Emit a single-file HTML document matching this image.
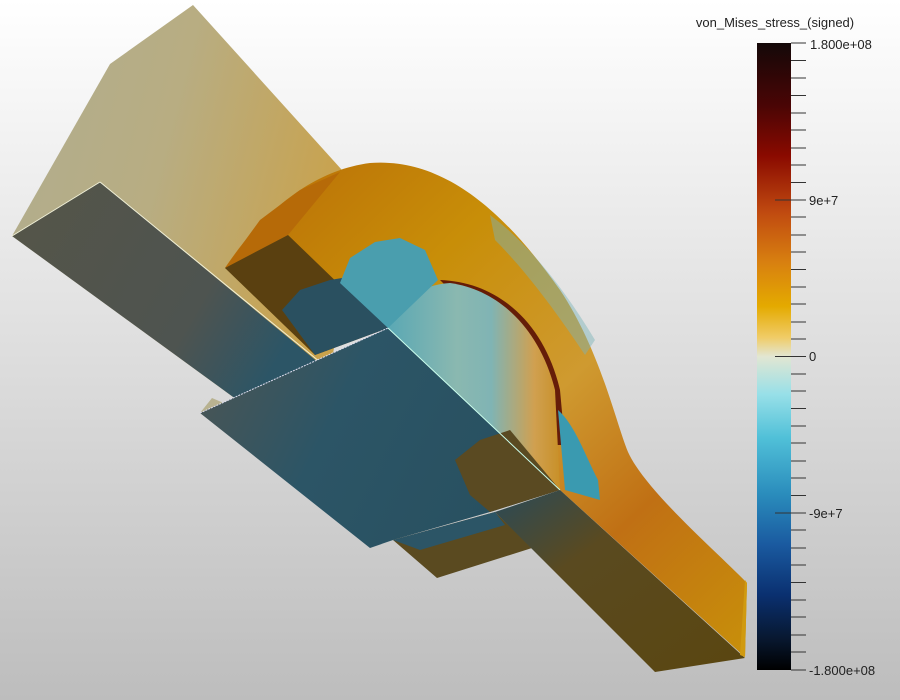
<!DOCTYPE html>
<html><head><meta charset="utf-8"><style>
html,body{margin:0;padding:0;width:900px;height:700px;overflow:hidden}
svg{display:block}
text{font-family:"Liberation Sans","DejaVu Sans",sans-serif;fill:#222}
</style></head><body>
<svg width="900" height="700" viewBox="0 0 900 700" xmlns="http://www.w3.org/2000/svg">
<defs>
<linearGradient id="bg" x1="0" y1="0" x2="0" y2="1">
<stop offset="0" stop-color="#ffffff"/><stop offset="1" stop-color="#bdbdbd"/></linearGradient>
<linearGradient id="top" x1="0" y1="0" x2="1" y2="0.3">
<stop offset="0" stop-color="#b0ad90"/><stop offset="0.5" stop-color="#b8ad82"/><stop offset="1" stop-color="#c9a24c"/></linearGradient>
<linearGradient id="arch" x1="0" y1="0" x2="1" y2="1">
<stop offset="0" stop-color="#b86c08"/><stop offset="0.3" stop-color="#c88e08"/><stop offset="0.55" stop-color="#cf9a30"/><stop offset="0.75" stop-color="#c07014"/><stop offset="1" stop-color="#c8900a"/></linearGradient>
<linearGradient id="hole" x1="0" y1="0" x2="1" y2="0">
<stop offset="0" stop-color="#5aa8b4"/><stop offset="0.4" stop-color="#8ab8b0"/><stop offset="0.6" stop-color="#80b4b4"/><stop offset="0.85" stop-color="#d0a050"/><stop offset="1" stop-color="#c89028"/></linearGradient>
<linearGradient id="grey" x1="0" y1="0" x2="1" y2="0.4">
<stop offset="0" stop-color="#555548"/><stop offset="0.7" stop-color="#4e5450"/><stop offset="1" stop-color="#2c5566"/></linearGradient>
<linearGradient id="slab" x1="0" y1="0" x2="1" y2="0.3">
<stop offset="0" stop-color="#4e5552"/><stop offset="0.45" stop-color="#2c5566"/><stop offset="1" stop-color="#285060"/></linearGradient>
<linearGradient id="rs" x1="0" y1="0" x2="1" y2="1">
<stop offset="0" stop-color="#2a4a58"/><stop offset="0.35" stop-color="#5a4a20"/><stop offset="1" stop-color="#5a4610"/></linearGradient>
<linearGradient id="cb" x1="0" y1="0" x2="0" y2="1">
<stop offset="0" stop-color="#140808"/><stop offset="0.1" stop-color="#4a0505"/><stop offset="0.18" stop-color="#8a0a00"/><stop offset="0.27" stop-color="#c04a10"/><stop offset="0.35" stop-color="#d88010"/><stop offset="0.42" stop-color="#e4aa00"/><stop offset="0.47" stop-color="#f0cc68"/><stop offset="0.5" stop-color="#e2e6d2"/><stop offset="0.56" stop-color="#98e0e8"/><stop offset="0.63" stop-color="#50c0d8"/><stop offset="0.72" stop-color="#2a8cbc"/><stop offset="0.8" stop-color="#1a5aa0"/><stop offset="0.88" stop-color="#0a3070"/><stop offset="0.95" stop-color="#081830"/><stop offset="1" stop-color="#000"/></linearGradient>
</defs>
<rect width="900" height="700" fill="url(#bg)"/>
<!-- top-left block light faces -->
<polygon points="12,236 110,64 193,5 360,190 330,372 240,402" fill="url(#top)"/>
<polygon points="200,413 212,398 226,404" fill="#b8b290"/>
<!-- arch body -->
<path d="M225,268 C250,230 300,172 370,163 C440,158 500,205 560,290 C600,350 615,420 628,452 C645,490 715,550 747,583 L745,657 L560,490 L388,328 Z" fill="url(#arch)"/>
<!-- blue streak on outer arch -->
<path d="M490,215 C530,245 565,290 595,340 L585,355 C555,310 525,270 495,240 Z" fill="#7ab4b8" opacity="0.45"/>
<!-- dark red band near hole -->
<path d="M440,280 C500,282 545,325 560,390 L565,445 L556,445 C552,380 520,305 450,290 Z" fill="#5a1005" opacity="0.9"/>
<!-- blue patch near small end -->
<path d="M558,410 C575,425 585,455 598,480 L600,500 L565,490 Z" fill="#3a9ab0"/>
<!-- hole face -->
<path d="M388,328 C400,300 420,285 450,283 C500,290 540,330 555,390 L560,490 Z" fill="url(#hole)"/>
<!-- left orange end -->
<polygon points="225,268 288,235 340,172 300,190 260,220" fill="#b66a08"/>
<!-- brown end face -->
<polygon points="225,268 288,235 345,290 388,328 315,355" fill="#5a4010"/>
<polygon points="282,310 300,290 330,280 360,275 388,328 315,355" fill="#2a5060"/>
<!-- blue cut region -->
<path d="M340,283 L350,258 L375,242 L400,238 L425,250 L438,280 L388,328 Z" fill="#4a9eae"/>
<!-- grey front face -->
<polygon points="12,236 100,182 330,372 240,402" fill="url(#grey)"/>
<line x1="12" y1="236" x2="100" y2="182" stroke="#f0f0d8" stroke-width="1"/>
<line x1="100" y1="182" x2="320" y2="362" stroke="#f0f0d8" stroke-width="1"/>
<!-- lower slab -->
<polygon points="200,413 388,328 560,490 490,512 393,540 370,548" fill="url(#slab)"/>
<path d="M455,460 L480,440 L510,430 L560,490 L490,512 L470,495 Z" fill="#5a4a22"/>
<line x1="200" y1="413" x2="388" y2="328" stroke="#dde" stroke-width="1" stroke-dasharray="2,1"/>
<line x1="388" y1="328" x2="560" y2="490" stroke="#cfe" stroke-width="1"/>
<!-- small lower block -->
<polygon points="393,540 437,578 532,548 495,512" fill="#5a4a20"/>
<polygon points="393,540 495,512 505,525 420,550" fill="#2c5566"/>
<!-- right slab dark face -->
<polygon points="495,512 560,490 745,658 655,672" fill="url(#rs)"/>
<polygon points="745,580 747,583 745,657 740,655" fill="#d09a10"/>
<!-- colorbar -->
<text x="775" y="27" font-size="13" text-anchor="middle">von_Mises_stress_(signed)</text>
<rect x="757" y="43" width="34" height="627" fill="url(#cb)"/>
<g stroke="#333" stroke-width="1">
<line x1="791" y1="60.5" x2="806" y2="60.5"/><line x1="791" y1="78" x2="806" y2="78"/><line x1="791" y1="95.5" x2="806" y2="95.5"/><line x1="791" y1="113" x2="806" y2="113"/><line x1="791" y1="130" x2="806" y2="130"/><line x1="791" y1="148" x2="806" y2="148"/><line x1="791" y1="165" x2="806" y2="165"/><line x1="791" y1="182.5" x2="806" y2="182.5"/>
<line x1="775" y1="200" x2="806" y2="200"/>
<line x1="791" y1="217" x2="806" y2="217"/><line x1="791" y1="235" x2="806" y2="235"/><line x1="791" y1="252" x2="806" y2="252"/><line x1="791" y1="269.5" x2="806" y2="269.5"/><line x1="791" y1="287" x2="806" y2="287"/><line x1="791" y1="304" x2="806" y2="304"/><line x1="791" y1="322" x2="806" y2="322"/><line x1="791" y1="339" x2="806" y2="339"/>
<line x1="775" y1="356.5" x2="806" y2="356.5"/>
<line x1="791" y1="374" x2="806" y2="374"/><line x1="791" y1="391" x2="806" y2="391"/><line x1="791" y1="408.5" x2="806" y2="408.5"/><line x1="791" y1="426" x2="806" y2="426"/><line x1="791" y1="443" x2="806" y2="443"/><line x1="791" y1="461" x2="806" y2="461"/><line x1="791" y1="478" x2="806" y2="478"/><line x1="791" y1="495.5" x2="806" y2="495.5"/>
<line x1="775" y1="513" x2="806" y2="513"/>
<line x1="791" y1="530" x2="806" y2="530"/><line x1="791" y1="548" x2="806" y2="548"/><line x1="791" y1="565" x2="806" y2="565"/><line x1="791" y1="582.5" x2="806" y2="582.5"/><line x1="791" y1="600" x2="806" y2="600"/><line x1="791" y1="617" x2="806" y2="617"/><line x1="791" y1="635" x2="806" y2="635"/><line x1="791" y1="652" x2="806" y2="652"/>
<line x1="791" y1="43" x2="806" y2="43"/><line x1="791" y1="670" x2="806" y2="670"/>
</g>
<text x="810" y="49" font-size="13">1.800e+08</text>
<text x="809" y="205" font-size="13">9e+7</text>
<text x="809" y="361" font-size="13">0</text>
<text x="809" y="518" font-size="13">-9e+7</text>
<text x="809" y="675" font-size="13">-1.800e+08</text>
</svg>
</body></html>
